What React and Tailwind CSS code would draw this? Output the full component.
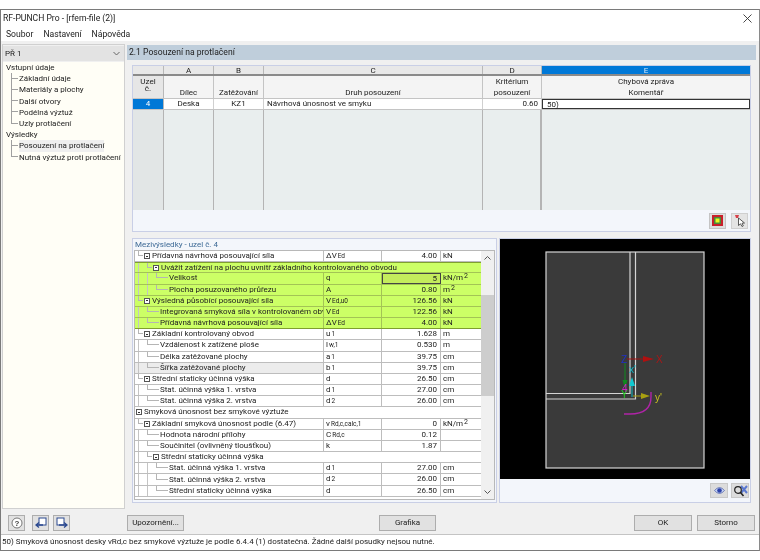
const font = "font-['Roboto','Liberation_Sans',Arial,sans-serif]";

const inputs = ["Základní údaje", "Materiály a plochy", "Další otvory", "Podélná výztuž", "Uzly protlačení"];
const results = ["Posouzení na protlačení", "Nutná výztuž proti protlačení"];

// level, has box, label, symbol, sub, value, unit, sup
const rows = [
  { lvl: 1, box: true, label: "Přídavná návrhová posouvající síla", sym: "ΔV", sub: "Ed", val: "4.00", unit: "kN" },
  { lvl: 2, box: true, label: "Uvážit zatížení na plochu uvnitř základního kontrolovaného obvodu", wide: true, green: true, first: true },
  { lvl: 3, label: "Velikost", sym: "q", val: "5", unit: "kN/m", sup: "2", green: true, active: true },
  { lvl: 3, label: "Plocha posuzovaného průřezu", sym: "A", val: "0.80", unit: "m", sup: "2", green: true },
  { lvl: 1, box: true, label: "Výsledná působící posouvající síla", sym: "V", sub: "Ed,u0", val: "126.56", unit: "kN", green: true },
  { lvl: 2, label: "Integrovaná smyková síla v kontrolovaném obv", sym: "V", sub: "Ed", val: "122.56", unit: "kN", green: true },
  { lvl: 2, label: "Přídavná návrhová posouvající síla", sym: "ΔV", sub: "Ed", val: "4.00", unit: "kN", green: true, last: true },
  { lvl: 1, box: true, label: "Základní kontrolovaný obvod", sym: "u", sub: "1", val: "1.628", unit: "m" },
  { lvl: 2, label: "Vzdálenost k zatížené ploše", sym: "l", sub: "w,1", val: "0.530", unit: "m" },
  { lvl: 2, label: "Délka zatěžované plochy", sym: "a", sub: "1", val: "39.75", unit: "cm" },
  { lvl: 2, label: "Šířka zatěžované plochy", sym: "b", sub: "1", val: "39.75", unit: "cm", gray: true },
  { lvl: 1, box: true, label: "Střední staticky účinná výška", sym: "d", val: "26.50", unit: "cm" },
  { lvl: 2, label: "Stat. účinná výška 1. vrstva", sym: "d", sub: "1", val: "27.00", unit: "cm" },
  { lvl: 2, label: "Stat. účinná výška 2. vrstva", sym: "d", sub: "2", val: "26.00", unit: "cm" },
  { lvl: 0, box: true, label: "Smyková únosnost bez smykové výztuže", wide: true },
  { lvl: 1, box: true, label: "Základní smyková únosnost podle (6.47)", sym: "v", sub: "Rd,c,calc,1", val: "0", unit: "kN/m", sup: "2" },
  { lvl: 2, label: "Hodnota národní přílohy", sym: "C", sub: "Rd,c", val: "0.12" },
  { lvl: 2, label: "Součinitel (ovlivněný tloušťkou)", sym: "k", val: "1.87" },
  { lvl: 2, box: true, label: "Střední staticky účinná výška", wide: true },
  { lvl: 3, label: "Stat. účinná výška 1. vrstva", sym: "d", sub: "1", val: "27.00", unit: "cm" },
  { lvl: 3, label: "Stat. účinná výška 2. vrstva", sym: "d", sub: "2", val: "26.00", unit: "cm" },
  { lvl: 3, label: "Střední staticky účinná výška", sym: "d", val: "26.50", unit: "cm" },
];

const Box = () => (
  <span className="w-[6px] h-[6px] border border-[#555] flex items-center justify-center mr-[2px] shrink-0 bg-white">
    <span className="w-[2px] h-px bg-[#333]" />
  </span>
);

const Guides = ({ lvl, box }) => {
  if (lvl === 0) return <span className="w-px shrink-0" />;
  const bars = [];
  for (let i = 1; i < lvl; i++) {
    bars.push(<span key={i} className="w-[9px] h-full border-l border-[#c4c4c4] shrink-0" />);
  }
  return (
    <span className="ml-[3px] flex h-full shrink-0 mr-px">
      {bars}
      <span className={`h-1/2 border-l border-b border-[#b5b5b5] shrink-0 ${box ? "w-[5px]" : "w-[12px]"}`} />
    </span>
  );
};

const Btn = ({ className, children }) => (
  <button className={`h-[16px] bg-[#e1e1e1] border border-[#adadad] flex items-center justify-center text-[8px] text-[#222] ${className}`}>
    {children}
  </button>
);

const TreeLine = ({ last }) => (
  <span className="ml-[7px] w-[7px] h-full flex flex-col shrink-0">
    <span className="h-1/2 border-l border-b border-[#a0a0a0]" />
    {!last && <span className="h-1/2 border-l border-[#a0a0a0]" />}
  </span>
);

const Sidebar = () => (
  <div className="w-[123px] ml-px flex flex-col border border-[#d0d0d0] shrink-0">
    <div className="h-[15px] mt-px bg-[#e3e3e3] flex items-center justify-between pl-[2px] pr-[4px] text-[8px] text-[#222]">
      <span>PŘ 1</span>
      <svg width="7" height="5" viewBox="0 0 7 5"><path d="M0.5 1 L3.5 4 L6.5 1" fill="none" stroke="#666" /></svg>
    </div>
    <div className="flex-1 mt-px bg-[#fffef6] pl-[1px] text-[8px] leading-[11.2px] text-[#222] whitespace-nowrap">
      <div className="h-[11.2px] pl-[2px]">Vstupní údaje</div>
      {inputs.map((t, i) => (
        <div key={t} className="h-[11.2px] flex items-center">
          <TreeLine last={i === inputs.length - 1} />
          <span className="ml-px">{t}</span>
        </div>
      ))}
      <div className="h-[11.2px] pl-[2px]">Výsledky</div>
      {results.map((t, i) => (
        <div key={t} className="h-[11.2px] flex items-center">
          <TreeLine last={i === results.length - 1} />
          <span className={`ml-px ${i === 0 ? "bg-[#efefef]" : ""}`}>{t}</span>
        </div>
      ))}
    </div>
  </div>
);

const colClass = ["w-[31px]", "w-[50px]", "w-[50px]", "w-[219px]", "w-[59px]", "flex-1"];

const TopTable = () => (
  <div className="h-[167px] mx-[5px] mt-[5px] border border-[#c9cfe6] bg-[#f3f6fb] flex flex-col text-[8px] text-[#222]">
    <div className="flex-1 flex flex-col">
      <div className="flex h-[10px] leading-[10px] text-center bg-[#e8e8e8] border-b-2 border-[#8a8a8a]">
        <div className={`${colClass[0]} border-r border-[#b8b8b8]`} />
        {["A", "B", "C", "D"].map((c, i) => (
          <div key={c} className={`${colClass[i + 1]} border-r border-[#b8b8b8]`}>{c}</div>
        ))}
        <div className="flex-1 bg-[#0078d7] text-[#cfe6fa]">E</div>
      </div>
      <div className="flex h-[23px] text-center leading-[11px] bg-[#f4f4f4] border-b border-[#c4c4c4]">
        <div className={`${colClass[0]} bg-[#e6e6e6] border-r border-[#b8b8b8] flex flex-col justify-start pt-[2px] leading-[7px]`}>
          <span>Uzel</span><span>č.</span>
        </div>
        <div className={`${colClass[1]} border-r border-[#c4c4c4] pt-[11px]`}>Dílec</div>
        <div className={`${colClass[2]} border-r border-[#c4c4c4] pt-[11px]`}>Zatěžování</div>
        <div className={`${colClass[3]} border-r border-[#c4c4c4] pt-[11px]`}>Druh posouzení</div>
        <div className={`${colClass[4]} border-r border-[#c4c4c4]`}>
          <div>Kritérium</div><div>posouzení</div>
        </div>
        <div className="flex-1">
          <div>Chybová zpráva</div><div>Komentář</div>
        </div>
      </div>
      <div className="flex h-[11px] leading-[10px] bg-white border-b border-[#c4c4c4]">
        <div className={`${colClass[0]} bg-[#0078d7] text-white text-center border-r border-[#b8b8b8]`}>4</div>
        <div className={`${colClass[1]} text-center border-r border-[#d0d0d0]`}>Deska</div>
        <div className={`${colClass[2]} text-center border-r border-[#d0d0d0]`}>KZ1</div>
        <div className={`${colClass[3]} pl-[3px] border-r border-[#d0d0d0]`}>Návrhová únosnost ve smyku</div>
        <div className={`${colClass[4]} text-right pr-[3px] border-r border-[#d0d0d0]`}>0.60</div>
        <div className="flex-1 border border-[#333] pl-[4px] leading-[9px]">50)</div>
      </div>
      <div className="flex-1 flex bg-[#e9eeee]">
        <div className={`${colClass[0]} bg-[#e2e6e6] border-r border-[#b4b4b4]`} />
        <div className={`${colClass[1]} border-r border-[#b4b4b4]`} />
        <div className={`${colClass[2]} border-r border-[#b4b4b4]`} />
        <div className={`${colClass[3]} border-r border-[#b4b4b4]`} />
        <div className={`${colClass[4]} border-r-2 border-[#b4b4b4]`} />
        <div className="flex-1" />
      </div>
    </div>
    <div className="h-[21px] flex items-center justify-end gap-[5px] pr-[2px]">
      <button className="w-[17px] h-[16px] bg-[#dedede] border border-[#c4c4c4] flex items-center justify-center">
        <svg width="11" height="11" viewBox="0 0 11 11">
          <rect width="11" height="11" fill="#c8202c" />
          <rect x="2" y="2" width="7" height="7" fill="#4a8a3a" />
          <rect x="3.5" y="3.5" width="4" height="4" fill="#e8f820" />
        </svg>
      </button>
      <button className="w-[17px] h-[16px] bg-[#e4e4e4] border border-[#cfcfcf] flex items-center justify-center">
        <svg width="13" height="13" viewBox="0 0 13 13">
          <path d="M2 1 L6 1 L5 4 L3 4 Z" fill="#d8404a" />
          <path d="M5.5 4 L5.5 11.5 L7.5 9.8 L9 12.5 L10.3 11.8 L9 9.2 L11.5 9 Z" fill="#fff" stroke="#333" strokeWidth="0.8" />
        </svg>
      </button>
    </div>
  </div>
);

const Row = ({ r }) => {
  const line = r.green ? "border-[#a3c455]" : "border-[#bdbdbd]";
  const bg = r.green ? "bg-[#ccff66]" : "bg-white";
  const edge = r.first ? "border-t border-t-[#7f9f2e]" : "";
  const bottom = r.last ? "border-b-[#7f9f2e]" : line;
  return (
    <div className={`flex h-[11.18px] leading-[10px] border-b ${bottom} ${edge} ${bg} overflow-hidden`}>
      <div className={`${r.wide ? "flex-1" : "w-[189px] border-r"} ${line} ${r.gray ? "bg-[#ececec]" : ""} flex items-center whitespace-nowrap overflow-hidden`}>
        <Guides lvl={r.lvl} box={r.box} />
        {r.box && <Box />}
        <span>{r.label}</span>
      </div>
      {!r.wide && (
        <>
          <div className={`w-[58px] border-r ${line} pl-[2px] whitespace-nowrap flex items-baseline`}>
            <span>{r.sym}</span>
            {r.sub && <span className="text-[6.5px] ml-px">{r.sub}</span>}
          </div>
          <div className={`w-[59px] border-r ${r.active ? "border border-[#444] bg-[#c4ec5c]" : line} text-right pr-[3px]`}>{r.val}</div>
          <div className="flex-1 pl-[2px] whitespace-nowrap">
            {r.unit}
            {r.sup && <span className="text-[7px] relative top-[-2px] ml-px">{r.sup}</span>}
          </div>
        </>
      )}
    </div>
  );
};

const Scrollbar = () => (
  <div className="w-[13px] bg-[#f0f0f0] flex flex-col items-center shrink-0">
    <svg width="9" height="12" viewBox="0 0 9 12" className="mt-[1px]"><path d="M1.5 7.5 L4.5 4.5 L7.5 7.5" fill="none" stroke="#555" /></svg>
    <div className="h-[31px]" />
    <div className="w-full h-[101px] bg-[#cdcdcd]" />
    <div className="flex-1" />
    <svg width="9" height="12" viewBox="0 0 9 12" className="mb-[1px]"><path d="M1.5 4.5 L4.5 7.5 L7.5 4.5" fill="none" stroke="#555" /></svg>
  </div>
);

const Results = () => (
  <div className="w-[365px] border border-[#c9cfe6] bg-[#f3f6fb] flex flex-col shrink-0 pl-px">
    <div className="h-[11px] leading-[11px] text-[8px] text-[#3e6a96] pl-[1px]">Mezivýsledky - uzel č. 4</div>
    <div className="flex-1 flex border border-[#b8b8b8] mr-px mb-[2px] text-[8px] text-[#222] overflow-hidden">
      <div className="flex-1 bg-white min-w-0">
        {rows.map((r) => <Row key={r.label + r.sym + r.lvl + r.val} r={r} />)}
      </div>
      <Scrollbar />
    </div>
  </div>
);

const Drawing = () => (
  <svg width="250" height="240" viewBox="0 0 250 240" className="block">
    <rect width="250" height="240" fill="#000" />
    <rect x="46" y="13" width="158" height="216" fill="#3a3a3a" stroke="#d4d4d4" strokeWidth="1.2" />
    <g fill="none" stroke="#d4d4d4" strokeWidth="1.2">
      <path d="M130 13 V154.5 H46" />
      <path d="M135.5 13 V160 H46" />
    </g>
    <path d="M151 153 V158 Q151 175 130 175 H124" fill="none" stroke="#b024a8" strokeWidth="1.4" />
    <path d="M127 120 H146" stroke="#a01010" strokeWidth="1" />
    <path d="M143 117 L154 120 L143 123 Z" fill="#b01010" />
    <path d="M125 124 V141" stroke="#0f8a1f" strokeWidth="1" />
    <path d="M122.5 141 L125 150 L127.5 141 Z" fill="#0f8a1f" />
    <path d="M132 158 V145" stroke="#10b8c0" strokeWidth="1" />
    <path d="M129 147 L132 138 L135 147 Z" fill="#10c8d0" />
    <path d="M133 157 H142" stroke="#a8a010" strokeWidth="1" />
    <path d="M141 154 L150 157 L141 160 Z" fill="#a8a010" />
    <g fontFamily="'Liberation Sans',sans-serif" fontSize="10">
      <text x="121" y="124" fill="#2030c8">Z</text>
      <text x="156" y="124" fill="#a81818">X</text>
      <text x="121" y="159" fill="#20d020">Y</text>
      <text x="122" y="153" fill="#d020c8">4</text>
      <text x="129" y="134" fill="#10b8c8">x'</text>
      <text x="155" y="162" fill="#c8c020">y'</text>
    </g>
  </svg>
);

const Graphic = () => (
  <div className="w-[252px] border border-[#c9cfe6] bg-[#f3f6fb] flex flex-col shrink-0">
    <Drawing />
    <div className="flex-1 flex items-center justify-end gap-[3px] pr-[1px]">
      <button className="w-[18px] h-[15px] bg-[#dcdcdc] border border-[#c8c8c8] flex items-center justify-center">
        <svg width="11" height="9" viewBox="0 0 11 9">
          <path d="M0.5 4.5 Q5.5 -1.5 10.5 4.5 Q5.5 10.5 0.5 4.5 Z" fill="#c8d4f4" stroke="#4a5ea8" strokeWidth="0.7" />
          <circle cx="5.5" cy="4.5" r="2.3" fill="#2c42a8" />
        </svg>
      </button>
      <button className="w-[18px] h-[15px] bg-[#dcdcdc] border border-[#c8c8c8] flex items-center justify-center">
        <svg width="15" height="13" viewBox="0 0 15 13">
          <path d="M8 2 L14 9 M14 2 L8 9" stroke="#5a78d0" strokeWidth="2" />
          <circle cx="5" cy="6" r="3.3" fill="none" stroke="#222" strokeWidth="1.2" />
          <path d="M7.5 8.5 L10.5 12" stroke="#222" strokeWidth="1.6" />
        </svg>
      </button>
    </div>
  </div>
);

const App = () => (
  <div className={`w-[760px] h-[560px] bg-white pt-[9px] pb-[9px] blur-[0.35px] ${font}`}>
    <div className="h-full border border-[#7a7a7a] border-r-[#8a8a8a] bg-[#f0f0f0] flex flex-col text-[#222]">
      <div className="bg-white h-[17px] flex items-center justify-between pl-[2px] pr-[7px] text-[8.6px]">
        <span>RF-PUNCH Pro - [rfem-file (2)]</span>
        <svg width="9" height="9" viewBox="0 0 9 9"><path d="M0.5 0.5 L8.5 8.5 M8.5 0.5 L0.5 8.5" stroke="#333" strokeWidth="0.9" /></svg>
      </div>
      <div className="bg-white h-[14px] flex items-center gap-[10px] pl-[5px] text-[8.6px]">
        <span>Soubor</span><span>Nastavení</span><span>Nápověda</span>
      </div>
      <div className="flex-1 flex pt-[3px] min-h-0">
        <Sidebar />
        <div className="flex-1 ml-[2px] mr-[3px] mb-[5px] flex flex-col min-w-0">
          <div className="h-[15px] leading-[15px] mt-[1px] bg-[#bfcedb] pl-[2px] text-[8.6px]">2.1 Posouzení na protlačení</div>
          <TopTable />
          <div className="flex-1 flex justify-between mx-[5px] mt-[6px] mb-[1px] min-h-0 gap-[2px]">
            <Results />
            <Graphic />
          </div>
        </div>
      </div>
      <div className="h-[26px] flex items-center border-b border-[#c4c4c4] pt-[2px]">
        <Btn className="w-[17px] ml-[7px]">
          <svg width="12" height="12" viewBox="0 0 12 12">
            <circle cx="6" cy="6" r="5" fill="#fff" stroke="#777" />
            <text x="6" y="9" textAnchor="middle" fontSize="8" fontWeight="bold" fill="#444" fontFamily="'Liberation Sans',sans-serif">?</text>
          </svg>
        </Btn>
        <Btn className="w-[17px] ml-[7px]">
          <svg width="12" height="12" viewBox="0 0 12 12">
            <rect x="4" y="1" width="7" height="7" fill="#fff" stroke="#2c4a90" />
            <path d="M1 8 H8 M4 5.5 L1 8 L4 10.5" fill="none" stroke="#2c4a90" strokeWidth="1.4" />
          </svg>
        </Btn>
        <Btn className="w-[17px] ml-[4px]">
          <svg width="12" height="12" viewBox="0 0 12 12">
            <rect x="1" y="1" width="7" height="7" fill="#fff" stroke="#2c4a90" />
            <path d="M3 8 H11 M8 5.5 L11 8 L8 10.5" fill="none" stroke="#2c4a90" strokeWidth="1.4" />
          </svg>
        </Btn>
        <Btn className="w-[57px] ml-[57px]">Upozornění...</Btn>
        <Btn className="w-[57px] ml-[195px]">Grafika</Btn>
        <Btn className="w-[58px] ml-auto">OK</Btn>
        <Btn className="w-[58px] ml-[5px] mr-[4px]">Storno</Btn>
      </div>
      <div className="h-[15px] leading-[14px] bg-white pl-[1px] text-[8px] whitespace-nowrap overflow-hidden">
        50) Smyková únosnost desky vRd,c bez smykové výztuže  je podle 6.4.4 (1) dostatečná. Žádné další posudky nejsou nutné.
      </div>
    </div>
  </div>
);

export default App;
